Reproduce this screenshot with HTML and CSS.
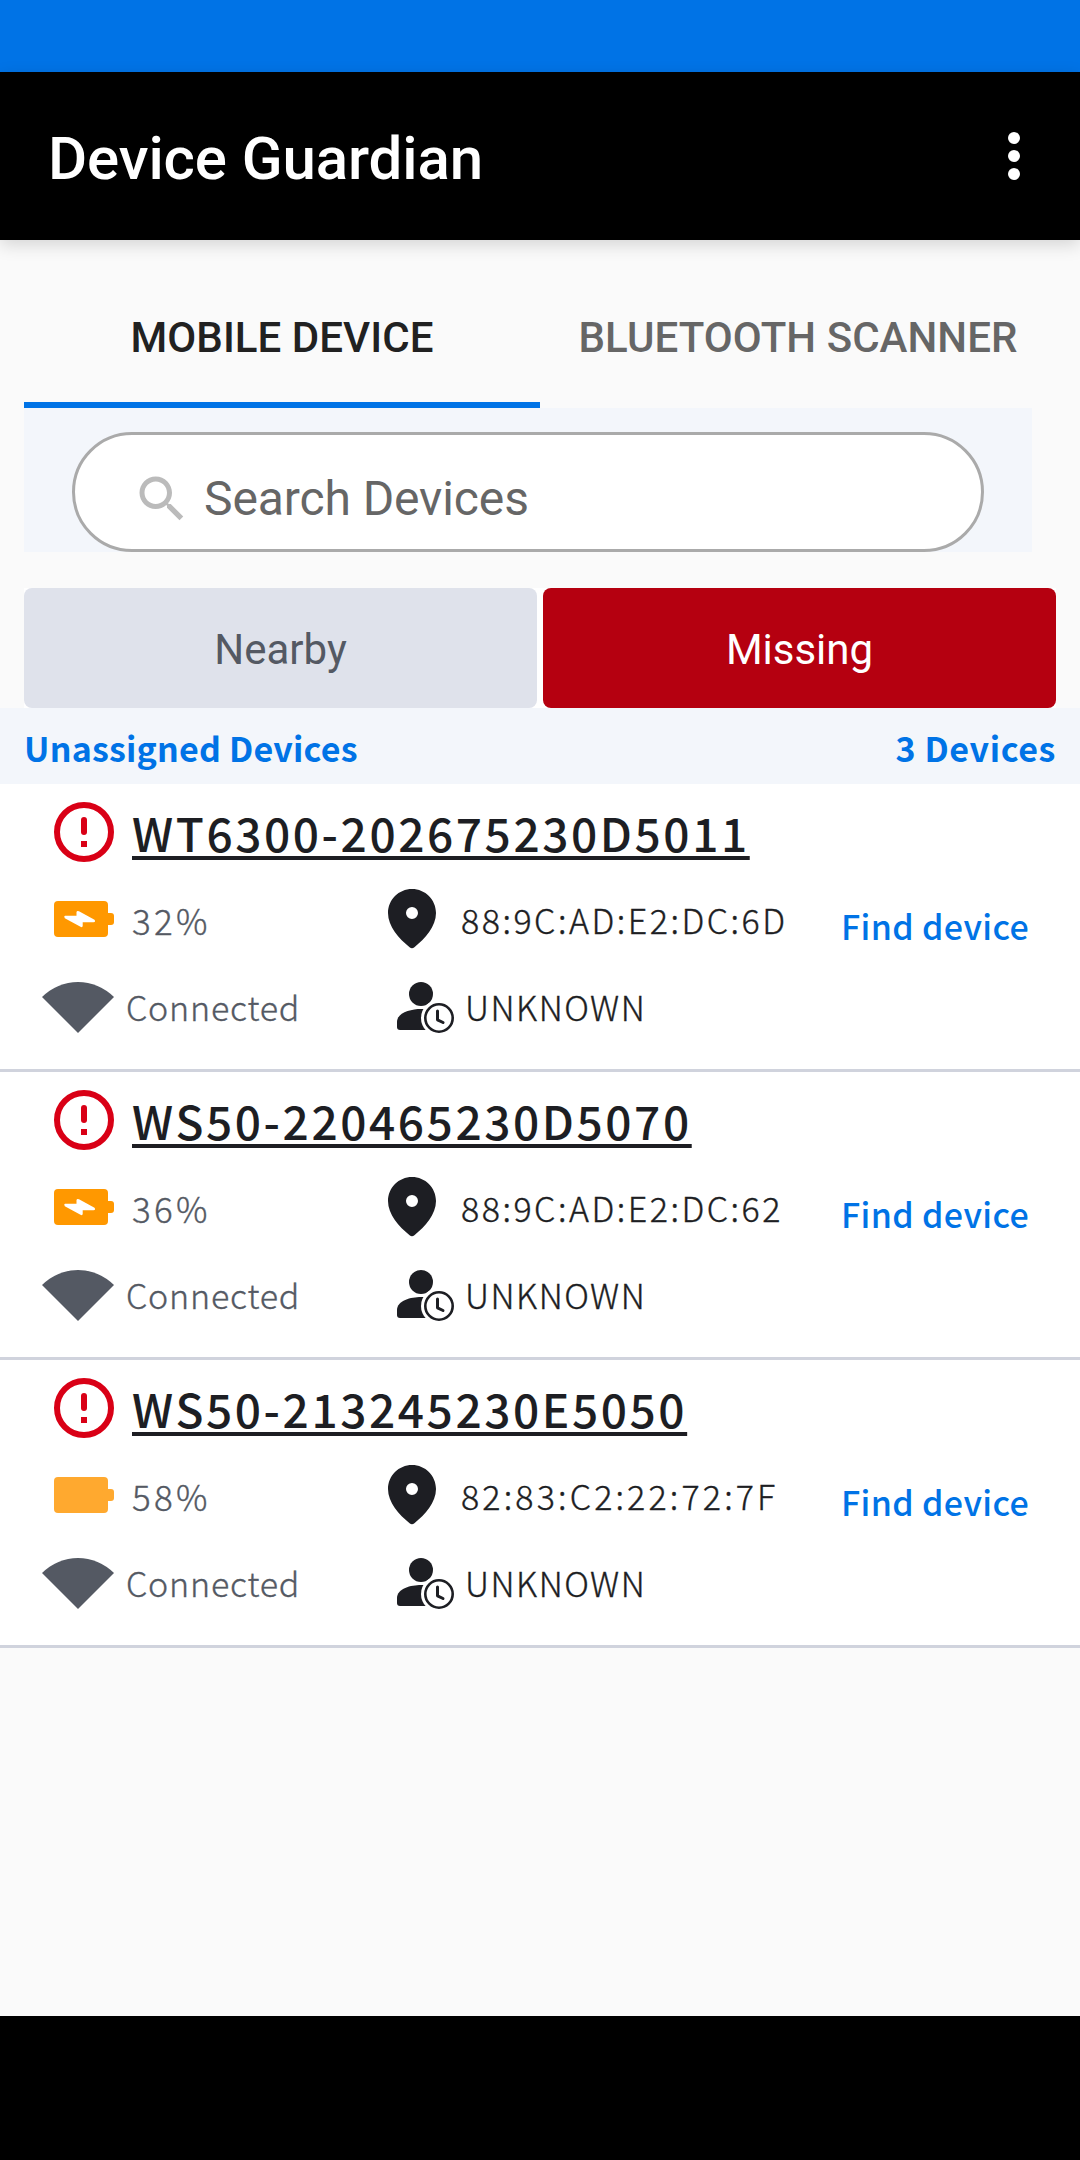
FILE: index.html
```html
<!DOCTYPE html>
<html lang="en">
<head>
<meta charset="utf-8">
<title>Device Guardian</title>
<link rel="stylesheet" href="styles.css">
</head>
<body>
<svg class="sprite" aria-hidden="true">
  <symbol id="alert" viewBox="0 0 72 60">
    <circle cx="42" cy="30" r="27" fill="none" stroke="#d90016" stroke-width="6"/>
    <rect x="39" y="15" width="6" height="18" rx="3" fill="#d90016"/>
    <rect x="39" y="39" width="6" height="6" fill="#d90016"/>
  </symbol>
  <symbol id="battery" viewBox="0 0 72 60">
    <rect x="12" y="12" width="54" height="36" rx="4" fill="currentColor"/>
    <rect x="60" y="24" width="12" height="12" rx="3" fill="currentColor"/>
  </symbol>
  <symbol id="bolt" viewBox="0 0 72 60">
    <path fill="#fff" d="M23 26.8H34.5V23Q35 21.5 37 22.3L52.5 30.8Q54 33 51.5 33.3H40.7V37Q40.5 38.8 38.5 37.8L22.8 29.3Q21.5 27.2 23 26.8Z"/>
  </symbol>
  <symbol id="wifi" viewBox="0 0 72 60">
    <path fill="#545963" d="M0 21A50.7 50.7 0 0 1 72 21L36 57Z"/>
  </symbol>
  <symbol id="pin" viewBox="0 0 72 60">
    <path fill="#1d1e23" fill-rule="evenodd" d="M24 0C10.7 0 0 10.7 0 24C0 37.500 11 49.500 21.600 58.300Q24 60 26.400 58.300C37 49.500 48 37.500 48 24C48 10.700 37.300 0 24 0ZM24 18A6 6 0 1 1 24 30A6 6 0 1 1 24 18Z"/>
  </symbol>
  <symbol id="user" viewBox="0 0 72 60">
    <circle cx="33" cy="18" r="12" fill="#1d1e23"/>
    <path fill="#1d1e23" d="M9 51V46C9 36.500 23 33 33 33H42V54H12Q9 54 9 51Z"/>
    <circle cx="51" cy="42" r="18" fill="#fff"/>
    <circle cx="51" cy="42" r="13.700" fill="none" stroke="#1d1e23" stroke-width="2.600"/>
    <path d="M49.500 35V43.800L55 46.500" fill="none" stroke="#1d1e23" stroke-width="3" stroke-linecap="round" stroke-linejoin="round"/>
  </symbol>
</svg>

<div class="status-bar"></div>
<header class="app-bar">
  <h1>Device Guardian</h1>
  <svg class="more" viewBox="0 0 12 48"><g fill="#fff"><circle cx="6" cy="6" r="6"/><circle cx="6" cy="24" r="6"/><circle cx="6" cy="42" r="6"/></g></svg>
</header>

<nav class="tabs">
  <a class="tab active">MOBILE DEVICE</a>
  <a class="tab">BLUETOOTH SCANNER</a>
</nav>

<div class="search-area">
  <div class="search-box">
    <svg viewBox="0 0 24 24"><path fill="#bbb" d="M15.500 14h-.79l-.28-.27C15.410 12.590 16 11.110 16 9.500 16 5.910 13.090 3 9.500 3S3 5.910 3 9.500 5.910 16 9.500 16c1.610 0 3.090-.59 4.230-1.570l.27.28v.79l5 4.990L20.490 19l-4.990-5zm-6 0C7.010 14 5 11.990 5 9.500S7.010 5 9.500 5 14 7.010 14 9.500 11.990 14 9.500 14z"/></svg>
    <span>Search Devices</span>
  </div>
</div>

<div class="filters">
  <button class="nearby">Nearby</button>
  <button class="missing">Missing</button>
</div>

<div class="group-header"><span>Unassigned Devices</span><span class="count">3 Devices</span></div>

<main>
  <section class="device">
    <div class="info">
      <div class="cell wide"><svg><use href="#alert"/></svg><a class="name">WT6300-202675230D5011</a></div>
      <div class="cell muted charging"><svg><use href="#battery"/><use href="#bolt"/></svg><span class="level">32%</span></div>
      <div class="cell"><svg><use href="#pin"/></svg><span class="mac">88:9C:AD:E2:DC:6D</span></div>
      <div class="cell muted"><svg><use href="#wifi"/></svg><span class="link-state">Connected</span></div>
      <div class="cell"><svg><use href="#user"/></svg><span class="user">UNKNOWN</span></div>
    </div>
    <a class="find">Find device</a>
  </section>
  <section class="device">
    <div class="info">
      <div class="cell wide"><svg><use href="#alert"/></svg><a class="name">WS50-220465230D5070</a></div>
      <div class="cell muted charging"><svg><use href="#battery"/><use href="#bolt"/></svg><span class="level">36%</span></div>
      <div class="cell"><svg><use href="#pin"/></svg><span class="mac">88:9C:AD:E2:DC:62</span></div>
      <div class="cell muted"><svg><use href="#wifi"/></svg><span class="link-state">Connected</span></div>
      <div class="cell"><svg><use href="#user"/></svg><span class="user">UNKNOWN</span></div>
    </div>
    <a class="find">Find device</a>
  </section>
  <section class="device">
    <div class="info">
      <div class="cell wide"><svg><use href="#alert"/></svg><a class="name">WS50-213245230E5050</a></div>
      <div class="cell muted partial"><svg><use href="#battery"/></svg><span class="level">58%</span></div>
      <div class="cell"><svg><use href="#pin"/></svg><span class="mac digits">82:83:C2:22:72:7F</span></div>
      <div class="cell muted"><svg><use href="#wifi"/></svg><span class="link-state">Connected</span></div>
      <div class="cell"><svg><use href="#user"/></svg><span class="user">UNKNOWN</span></div>
    </div>
    <a class="find">Find device</a>
  </section>
</main>
<footer class="nav-bar"></footer>
</body>
</html>
```
FILE: styles.css
```css
* { box-sizing: border-box; }

body {
  margin: 0;
  width: 1080px;
  height: 2160px;
  display: flex;
  flex-direction: column;
  overflow: hidden;
  background: #fafafa;
  color: #1d1e23;
  font-family: Roboto, sans-serif;
}

body > * { flex-shrink: 0; }
svg { display: block; flex: none; }
.sprite { position: absolute; width: 0; height: 0; }

.status-bar { height: 72px; background: #0073e6; }

.app-bar {
  height: 168px;
  padding: 5px 60px 0 48px;
  display: flex;
  align-items: center;
  justify-content: space-between;
  background: #000;
  box-shadow: 0 5px 16px rgba(0, 0, 0, .15);
}
.app-bar h1 {
  margin: 0;
  color: #fff;
  font-size: 60px;
  font-weight: 500;
  line-height: 72px;
  letter-spacing: -.1px;
}
.more { width: 12px; height: 48px; margin-bottom: 5px; }

.tabs { display: flex; height: 168px; padding: 0 24px; }
.tab {
  width: 516px;
  padding-top: 68px;
  border-bottom: 6px solid transparent;
  color: #666;
  font-size: 42px;
  font-weight: 500;
  line-height: 60px;
  letter-spacing: .05px;
  text-align: center;
  white-space: nowrap;
}
.tab.active { color: #212121; border-color: #0073e6; }

.search-area {
  width: 1008px;
  height: 144px;
  margin-left: 24px;
  padding: 24px 48px 0;
  background: #f3f6fb;
}
.search-box {
  height: 120px;
  padding: 13px 0 0 57px;
  display: flex;
  align-items: center;
  gap: 12px;
  border: 3px solid #aaa;
  border-radius: 60px;
  background: #fff;
  color: #666;
  font-size: 48px;
  line-height: 60px;
  letter-spacing: -.1px;
}
.search-box svg { width: 60px; height: 60px; }

.filters {
  display: grid;
  grid-template-columns: 1fr 1fr;
  gap: 6px;
  height: 120px;
  margin: 36px 24px 0;
  background: #fff;
}
.filters button {
  border: 0;
  border-radius: 8px;
  padding: 3px 0 0;
  font: 400 42px/60px Roboto, sans-serif;
}
.nearby { background: #dfe2eb; color: #545963; }
.missing { background: #b50010; color: #fff; }

.group-header, main { font-family: "Noto Sans CJK JP", sans-serif; font-size: 34px; line-height: 60px; }

.group-header {
  height: 76px;
  padding: 4px 24px 0;
  display: flex;
  align-items: center;
  justify-content: space-between;
  background: #f3f6fb;
  color: #0073e6;
  font-weight: 700;
  letter-spacing: .2px;
}
.count { letter-spacing: .6px; }

.device {
  height: 288px;
  display: flex;
  align-items: flex-start;
  border-bottom: 3px solid #d0d3dd;
  background: #fff;
}
.info {
  width: 840px;
  padding: 18px 0 0 42px;
  display: grid;
  grid-template-columns: 346px 1fr;
  grid-auto-rows: 60px;
  row-gap: 27px;
  font-weight: 300;
}
.cell { display: flex; white-space: nowrap; }
.cell svg { width: 72px; height: 60px; }
.cell span { padding-top: 1px; -webkit-text-stroke: .35px currentColor; }
.wide { grid-column: 1 / -1; }
.muted { color: #545963; }
.charging svg { color: #ff9800; }
.partial svg { color: #ffa92f; }

.name {
  margin-left: 18px;
  font-size: 46px;
  font-weight: 500;
  letter-spacing: 2.58px;
  text-decoration: underline;
  text-decoration-thickness: 4px;
  text-underline-offset: 4px;
  text-decoration-skip-ink: none;
}
.level { margin-left: 18px; font-size: 35px; letter-spacing: 3.3px; }
.mac { margin-left: 1px; letter-spacing: 2.5px; }
.mac.digits { letter-spacing: 3.15px; }
.link-state { margin-left: 12px; letter-spacing: .8px; }
.user { margin-left: 5px; letter-spacing: 1.5px; }

.find {
  margin: 112px 0 0 1px;
  color: #0073e6;
  font-weight: 500;
  letter-spacing: .35px;
  white-space: nowrap;
}

.nav-bar { height: 144px; margin-top: auto; background: #000; }
```
